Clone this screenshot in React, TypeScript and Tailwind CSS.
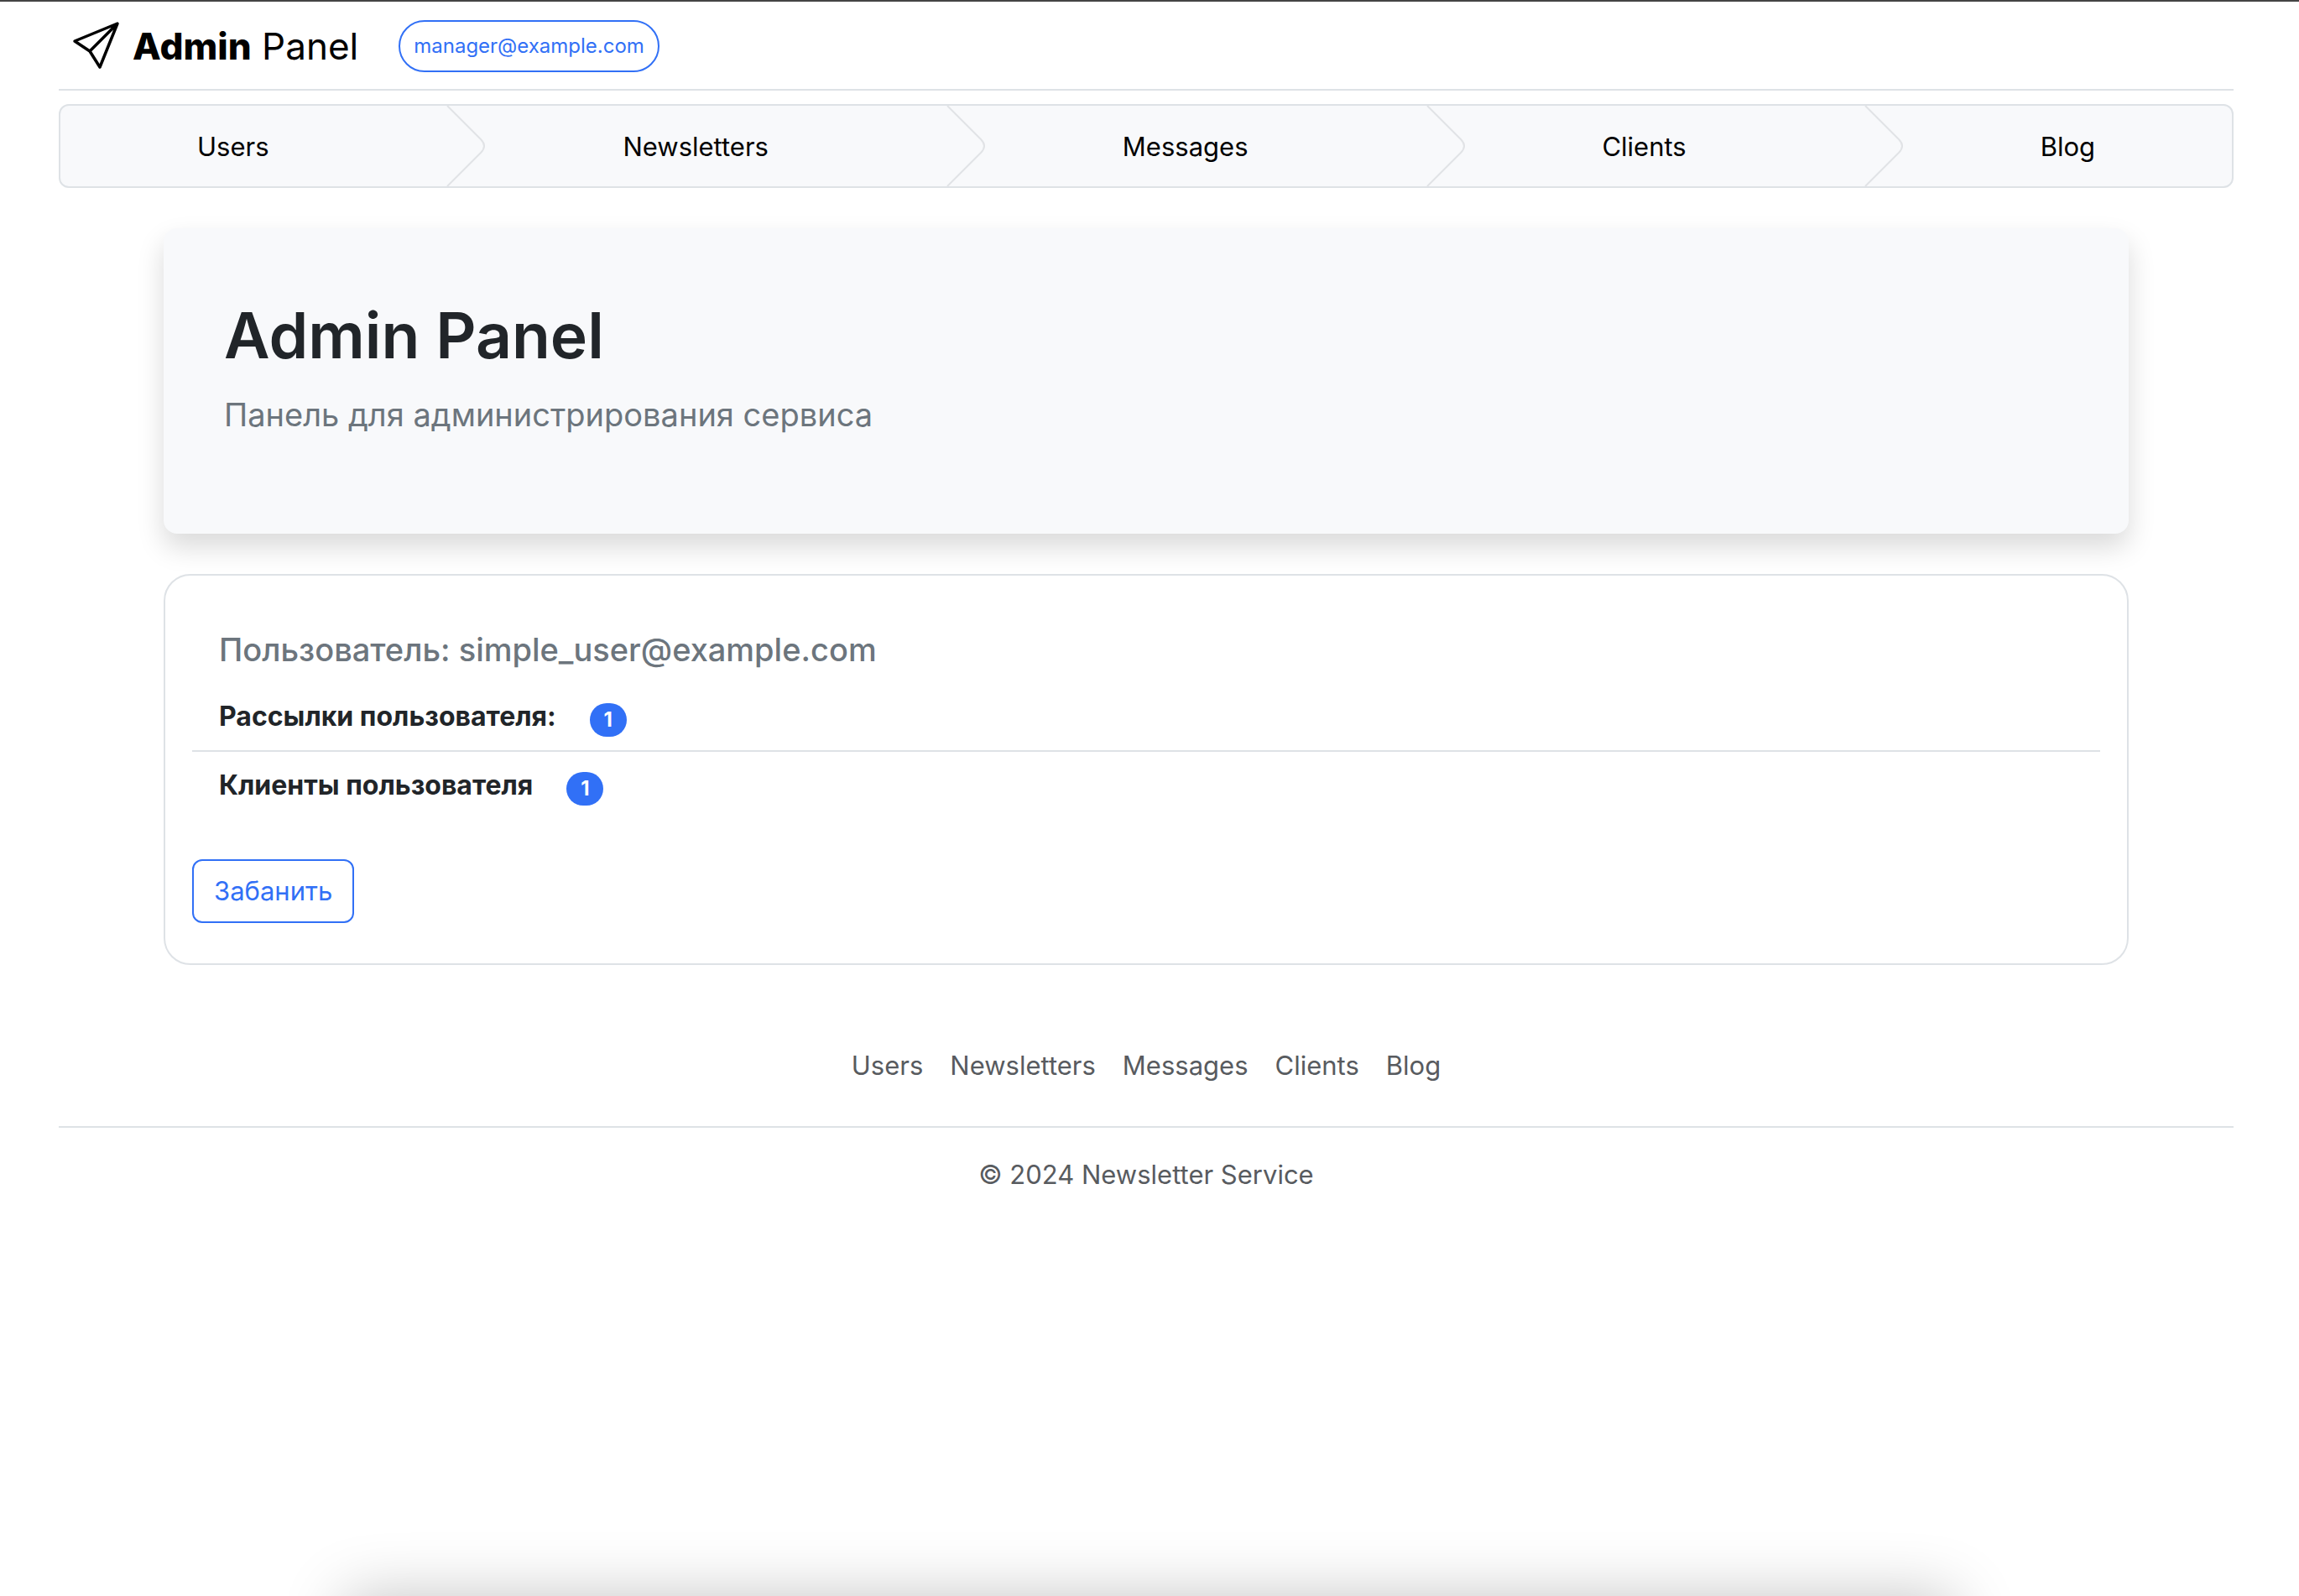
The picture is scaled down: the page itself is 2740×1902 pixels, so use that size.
import { Fragment } from "react";

const sections = ["Users", "Newsletters", "Messages", "Clients", "Blog"];

function PlaneIcon() {
  return (
    <svg className="h-16 w-16" viewBox="0 0 64 64" fill="none" stroke="currentColor" strokeWidth="3.5" strokeLinejoin="round" aria-hidden="true">
      <path d="M58 5 7 26 25 38 37 57Z M58 5 25 38" />
    </svg>
  );
}

function Chevron() {
  return (
    <li className="flex w-24 justify-end" aria-hidden="true">
      <svg className="h-24 w-12" viewBox="0 0 48 96" fill="none" stroke="#e1e3e6" strokeWidth="2">
        <path d="M2 0 L42 40 Q50 48 42 56 L2 96" />
      </svg>
    </li>
  );
}

function CountRow({ label, count }: { label: string; count: number }) {
  return (
    <div className="flex items-end gap-10 px-8">
      <h5 className="text-[32px] leading-12 font-bold">{label}</h5>
      <span className="flex h-10 min-w-11 items-center justify-center rounded-full bg-[#3170f6] text-2xl font-bold text-white">{count}</span>
    </div>
  );
}

export default function App() {
  return (
    <div className="min-h-screen overflow-x-hidden border-t-2 border-[#444444] bg-white pr-2 font-['Inter','Noto_Sans',sans-serif] text-[31px] leading-12 text-[#212529]">
      <div className="px-[70px]">
        <header className="flex h-[106px] items-center border-b-2 border-[#dee2e6] px-3 pt-0.5">
          <a href="#" className="flex items-center gap-3 text-black">
            <PlaneIcon />
            <span className="text-[44px]"><b className="font-extrabold">Admin</b> Panel</span>
          </a>
          <button className="ml-12 h-[62px] rounded-full border-2 border-[#3170f6] px-4 text-2xl text-[#3170f6]">manager@example.com</button>
        </header>
        <nav className="mt-4" aria-label="Sections">
          <ol className="flex h-[100px] items-center overflow-hidden rounded-xl border-2 border-[#dee2e6] bg-[#f8f9fb]">
            {sections.map((name, i) => (
              <Fragment key={name}>
                {i > 0 && <Chevron />}
                <li className="flex-auto pt-0.5 text-center text-black"><a href="#">{name}</a></li>
              </Fragment>
            ))}
          </ol>
        </nav>
        <main className="px-[125px] pt-12">
          <section className="h-[364px] rounded-2xl bg-[#f8f9fb] px-[72px] pt-20 shadow-[0_16px_32px_rgba(0,0,0,0.15)]">
            <h1 className="text-[75px] leading-24 font-semibold">Admin Panel</h1>
            <p className="mt-4 text-[38px] leading-15 text-[#6c757d]">Панель для администрирования сервиса</p>
          </section>
          <section className="mt-12 rounded-[32px] border-2 border-[#dee2e6] px-8 pt-16 pb-12">
            <h4 className="px-8 text-[38px] leading-12 font-medium text-[#6c757d]">Пользователь: simple_user@example.com</h4>
            <div className="border-b-2 border-[#dee2e6] pt-8 pb-4"><CountRow label="Рассылки пользователя:" count={1} /></div>
            <div className="pt-4"><CountRow label="Клиенты пользователя" count={1} /></div>
            <button className="mt-16 h-19 rounded-xl border-2 border-[#3170f6] px-6 text-[#3170f6]">Забанить</button>
          </section>
        </main>
        <footer className="pt-24 text-center text-[#585b5f]">
          <ul className="flex justify-center gap-8 border-b-2 border-[#dee2e6] pb-12">
            {sections.map((name) => (
              <li key={name}><a href="#">{name}</a></li>
            ))}
          </ul>
          <p className="pt-8">© 2024 Newsletter Service</p>
        </footer>
      </div>
      <div className="fixed top-full right-[15%] left-[15%] h-40 shadow-[0_0_76px_rgba(0,0,0,0.23)]" />
    </div>
  );
}
